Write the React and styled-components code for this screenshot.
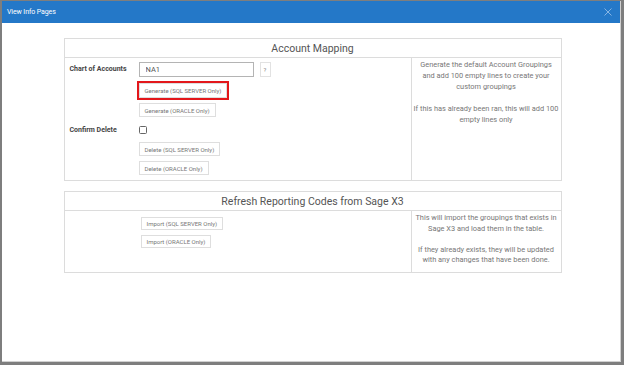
import React from "react";
import styled, { createGlobalStyle } from "styled-components";

const GlobalStyle = createGlobalStyle`
  html, body { margin: 0; padding: 0; background: #7e7e7e; }
  body { font-family: Roboto, "Liberation Sans", sans-serif; }
  * { box-sizing: border-box; }
`;

const Screen = styled.div`
  width: 624px;
  height: 365px;
  padding: 1px 3px 3px 2px;
  background: #7e7e7e;
  display: flex;
`;

const Modal = styled.div`
  flex: 1;
  background: #fff;
  display: flex;
  flex-direction: column;
  border-right: 1px solid #d0d0d0;
  border-bottom: 1px solid #d0d0d0;
`;

const Header = styled.div`
  height: 22px;
  flex: none;
  background: #2478c8;
  display: flex;
  align-items: center;
  justify-content: space-between;
  padding: 0 8px 0 5px;
`;

const Title = styled.span`
  color: #fff;
  font-size: 7px;
  letter-spacing: -0.1px;
`;

const Close = styled.button`
  border: 0;
  background: none;
  padding: 0;
  width: 8px;
  height: 8px;
  display: flex;
  cursor: pointer;
`;

const Body = styled.div`
  padding: 15px 0 0 3px;
  display: flex;
  flex-direction: column;
  align-items: center;
  gap: 10px;
`;

const Panel = styled.section`
  width: 498px;
  border: 1px solid #dcdcdc;
`;

const PanelTitle = styled.div`
  height: 19px;
  border-bottom: 1px solid #dcdcdc;
  display: flex;
  align-items: center;
  justify-content: center;
  font-size: 10.5px;
  color: #555;
  padding-top: 1px;
`;

const PanelBody = styled.div`
  display: grid;
  grid-template-columns: 1fr 150px;
`;

const LeftCell = styled.div`
  padding: ${(p) => p.$pad};
`;

const InfoCell = styled.div`
  border-left: 1px solid #dcdcdc;
  padding: ${(p) => p.$pad};
  text-align: center;
  font-size: 7.4px;
  line-height: ${(p) => p.$lh}px;
  color: #777;
`;

const Para = styled.p`
  margin: 0;
  & + & { margin-top: ${(p) => p.$lh}px; }
`;

const FormGrid = styled.div`
  display: grid;
  grid-template-columns: 69px 1fr;
  row-gap: 9px;
`;

const Label = styled.label`
  font-size: 7px;
  font-weight: 700;
  color: #444;
  height: ${(p) => p.$h}px;
  line-height: ${(p) => p.$h}px;
  white-space: nowrap;
`;

const Stack = styled.div`
  display: flex;
  flex-direction: column;
  align-items: flex-start;
  gap: ${(p) => p.$gap}px;
`;

const InputRow = styled.div`
  display: flex;
  gap: 6px;
  margin-bottom: 1px;
`;

const TextInput = styled.input`
  width: 115px;
  height: 15px;
  border: 1px solid #b4b4b4;
  padding: 0 0 0 6px;
  font-family: inherit;
  font-size: 7.5px;
  color: #555;
  outline: none;
`;

const HelpButton = styled.button`
  width: 11px;
  height: 15px;
  border: 1px solid #e2e2e2;
  background: #fff;
  padding: 0;
  font-family: inherit;
  font-size: 6px;
  color: #888;
`;

const ActionButton = styled.button`
  height: ${(p) => p.$h || 14}px;
  border: 1px solid #dedede;
  background: #fff;
  padding: 0 5px;
  font-family: inherit;
  font-size: 6px;
  color: #777;
  white-space: nowrap;
  outline: ${(p) => (p.$highlight ? "2px solid #e3171b" : "none")};
  outline-offset: 0;
`;

const CheckBox = styled.input.attrs({ type: "checkbox" })`
  appearance: none;
  margin: 0 0 3px 0;
  width: 8px;
  height: 8px;
  border: 1px solid #666;
  border-radius: 1.5px;
  background: #fff;
`;

export default function App() {
  return (
    <>
      <GlobalStyle />
      <Screen>
        <Modal>
          <Header>
            <Title>View Info Pages</Title>
            <Close aria-label="Close">
              <svg width="8" height="8" viewBox="0 0 8 8">
                <path d="M0.5 0.5 L7.5 7.5 M7.5 0.5 L0.5 7.5" stroke="#9fc4ea" strokeWidth="0.8" />
              </svg>
            </Close>
          </Header>
          <Body>
            <Panel>
              <PanelTitle>Account Mapping</PanelTitle>
              <PanelBody>
                <LeftCell $pad="4px 0 5px 5px">
                  <FormGrid>
                    <Label $h={15}>Chart of Accounts</Label>
                    <Stack $gap={5}>
                      <InputRow>
                        <TextInput defaultValue="NA1" />
                        <HelpButton>?</HelpButton>
                      </InputRow>
                      <ActionButton $h={15} $highlight>Generate (SQL SERVER Only)</ActionButton>
                      <ActionButton>Generate (ORACLE Only)</ActionButton>
                    </Stack>
                    <Label $h={8}>Confirm Delete</Label>
                    <Stack $gap={5}>
                      <CheckBox />
                      <ActionButton>Delete (SQL SERVER Only)</ActionButton>
                      <ActionButton>Delete (ORACLE Only)</ActionButton>
                    </Stack>
                  </FormGrid>
                </LeftCell>
                <InfoCell $pad="1px 1px 0" $lh={11}>
                  <Para $lh={11}>
                    Generate the default Account Groupings
                    <br />
                    and add 100 empty lines to create your
                    <br />
                    custom groupings
                  </Para>
                  <Para $lh={11}>If this has already been ran, this will add 100 empty lines only</Para>
                </InfoCell>
              </PanelBody>
            </Panel>
            <Panel>
              <PanelTitle>Refresh Reporting Codes from Sage X3</PanelTitle>
              <PanelBody>
                <LeftCell $pad="6px 0 0 76px">
                  <Stack $gap={5}>
                    <ActionButton $h={13}>Import (SQL SERVER Only)</ActionButton>
                    <ActionButton $h={13}>Import (ORACLE Only)</ActionButton>
                  </Stack>
                </LeftCell>
                <InfoCell $pad="2px 1px 6px" $lh={10.5}>
                  <Para $lh={10.5}>
                    This will import the groupings that exists in Sage X3 and load them in the table.
                  </Para>
                  <Para $lh={10.5}>
                    If they already exists, they will be updated with any changes that have been done.
                  </Para>
                </InfoCell>
              </PanelBody>
            </Panel>
          </Body>
        </Modal>
      </Screen>
    </>
  );
}
